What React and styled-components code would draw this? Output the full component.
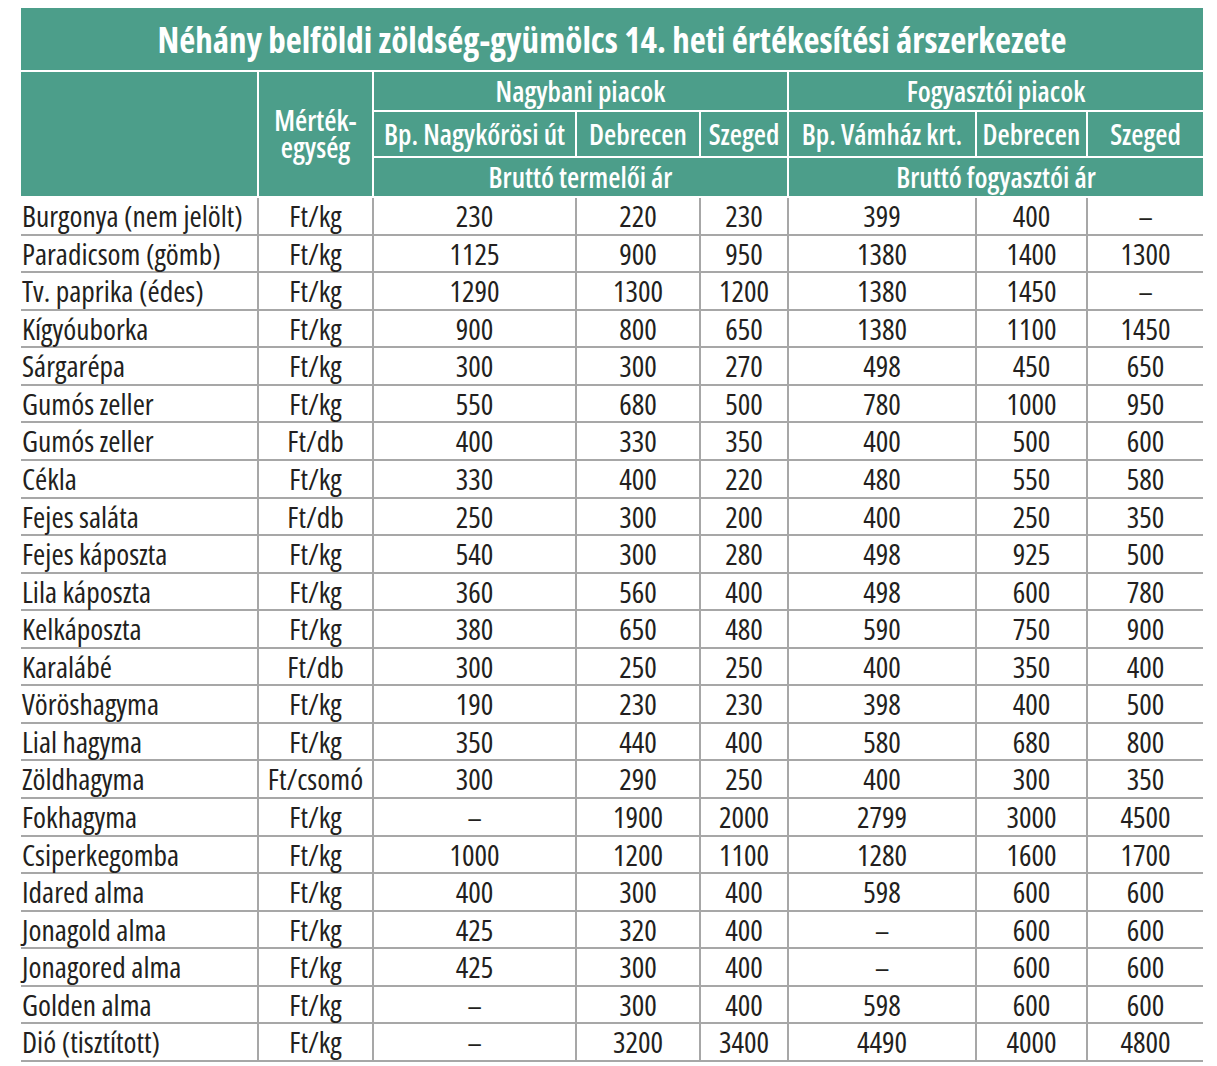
import React from "react";
import styled, { createGlobalStyle } from "styled-components";

const GlobalStyle = createGlobalStyle`
  body {
    margin: 0;
    background: #ffffff;
    font-family: "Open Sans", "Noto Sans", sans-serif;
  }
`;

const rows = [
  ["Burgonya (nem jelölt)", "Ft/kg", "230", "220", "230", "399", "400", "–"],
  ["Paradicsom (gömb)", "Ft/kg", "1125", "900", "950", "1380", "1400", "1300"],
  ["Tv. paprika (édes)", "Ft/kg", "1290", "1300", "1200", "1380", "1450", "–"],
  ["Kígyóuborka", "Ft/kg", "900", "800", "650", "1380", "1100", "1450"],
  ["Sárgarépa", "Ft/kg", "300", "300", "270", "498", "450", "650"],
  ["Gumós zeller", "Ft/kg", "550", "680", "500", "780", "1000", "950"],
  ["Gumós zeller", "Ft/db", "400", "330", "350", "400", "500", "600"],
  ["Cékla", "Ft/kg", "330", "400", "220", "480", "550", "580"],
  ["Fejes saláta", "Ft/db", "250", "300", "200", "400", "250", "350"],
  ["Fejes káposzta", "Ft/kg", "540", "300", "280", "498", "925", "500"],
  ["Lila káposzta", "Ft/kg", "360", "560", "400", "498", "600", "780"],
  ["Kelkáposzta", "Ft/kg", "380", "650", "480", "590", "750", "900"],
  ["Karalábé", "Ft/db", "300", "250", "250", "400", "350", "400"],
  ["Vöröshagyma", "Ft/kg", "190", "230", "230", "398", "400", "500"],
  ["Lial hagyma", "Ft/kg", "350", "440", "400", "580", "680", "800"],
  ["Zöldhagyma", "Ft/csomó", "300", "290", "250", "400", "300", "350"],
  ["Fokhagyma", "Ft/kg", "–", "1900", "2000", "2799", "3000", "4500"],
  ["Csiperkegomba", "Ft/kg", "1000", "1200", "1100", "1280", "1600", "1700"],
  ["Idared alma", "Ft/kg", "400", "300", "400", "598", "600", "600"],
  ["Jonagold alma", "Ft/kg", "425", "320", "400", "–", "600", "600"],
  ["Jonagored alma", "Ft/kg", "425", "300", "400", "–", "600", "600"],
  ["Golden alma", "Ft/kg", "–", "300", "400", "598", "600", "600"],
  ["Dió (tisztított)", "Ft/kg", "–", "3200", "3400", "4490", "4000", "4800"],
];

const widths = [237, 115, 203, 124, 88, 188, 111, 116];

const App = () => {
  return (
    <Page>
      <GlobalStyle />
      <Table>
        <colgroup>
          {widths.map((w, i) => (
            <col key={i} style={{ width: w }} />
          ))}
        </colgroup>
        <thead>
          <tr>
            <Title colSpan={8}>
              Néhány belföldi zöldség-gyümölcs 14. heti értékesítési árszerkezete
            </Title>
          </tr>
          <tr>
            <Head rowSpan={3} />
            <Head rowSpan={3}>
              <Unit>Mérték-</Unit>
              <Unit>egység</Unit>
            </Head>
            <Head colSpan={3} $h={38}>
              Nagybani piacok
            </Head>
            <Head colSpan={3} $h={38}>
              Fogyasztói piacok
            </Head>
          </tr>
          <tr>
            <Head $h={44}>Bp. Nagykőrösi út</Head>
            <Head $h={44}>Debrecen</Head>
            <Head $h={44}>Szeged</Head>
            <Head $h={44}>Bp. Vámház krt.</Head>
            <Head $h={44}>Debrecen</Head>
            <Head $h={44}>Szeged</Head>
          </tr>
          <tr>
            <Head colSpan={3} $h={38}>
              Bruttó termelői ár
            </Head>
            <Head colSpan={3} $h={38}>
              Bruttó fogyasztói ár
            </Head>
          </tr>
        </thead>
        <tbody>
          {rows.map((r, i) => (
            <Row key={i}>
              {r.map((v, j) => (
                <Cell key={j} $name={j === 0}>
                  {v}
                </Cell>
              ))}
            </Row>
          ))}
        </tbody>
      </Table>
    </Page>
  );
};

const Page = styled.div`
  padding: 8px 14px 0 21px;
`;

const Table = styled.table`
  width: 1182px;
  border-collapse: collapse;
  table-layout: fixed;
  font-stretch: condensed;
  color: #231f20;
`;

const Title = styled.th`
  height: 62px;
  padding: 0;
  background: #4c9e8a;
  color: #ffffff;
  font-size: 35px;
  font-weight: 700;
  line-height: 1;
  text-align: center;
  border-bottom: 2px solid #ffffff;
`;

const Head = styled.th`
  height: ${(p) => (p.$h ? `${p.$h}px` : "auto")};
  padding: 0;
  background: #4c9e8a;
  color: #ffffff;
  font-size: 28px;
  font-weight: 600;
  line-height: 1;
  text-align: center;
  white-space: nowrap;
  border: 2px solid #ffffff;
  &:first-child {
    border-left: none;
  }
  &:last-child {
    border-right: none;
  }
`;

const Unit = styled.div`
  line-height: 27px;
`;

const Row = styled.tr`
  height: 37.57px;
`;

const Cell = styled.td`
  padding: 0 0 0 ${(p) => (p.$name ? "1px" : "0")};
  font-size: 29.5px;
  line-height: 1;
  text-align: ${(p) => (p.$name ? "left" : "center")};
  white-space: nowrap;
  border: 2px solid #a7a7a7;
  border-top: none;
  &:first-child {
    border-left: none;
  }
  &:last-child {
    border-right: none;
  }
`;

export default App;
